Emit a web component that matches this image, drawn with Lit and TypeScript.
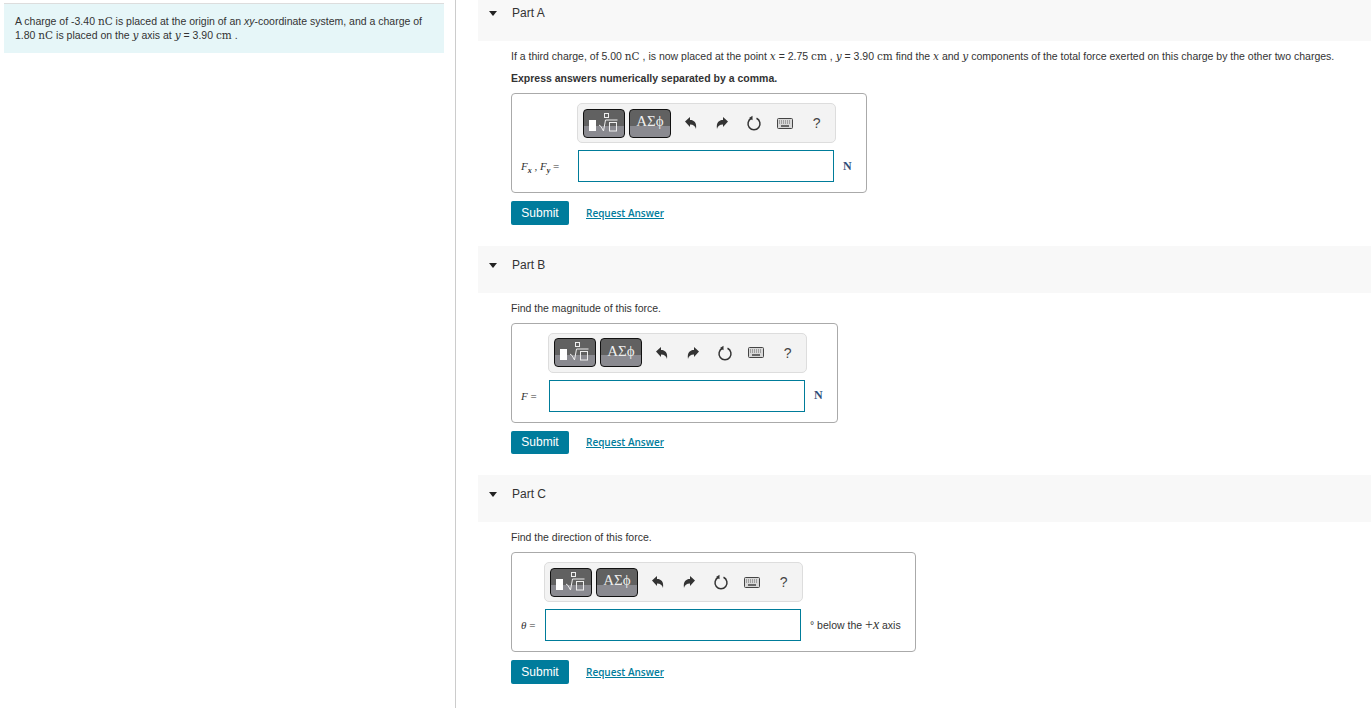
import { LitElement, html, css, nothing, TemplateResult } from 'lit';
import { customElement, property } from 'lit/decorators.js';

const mi = (s: string) => html`<span class="mi">${s}</span>`;
const mu = (s: string) => html`<span class="mu">${s}</span>`;

@customElement('answer-box')
export class AnswerBox extends LitElement {
  @property({ type: Number }) labelWidth = 66;
  @property({ type: Object }) label: TemplateResult | null = null;
  @property({ type: Object }) unit: TemplateResult | null = null;

  static styles = css`
    :host {
      display: block;
      width: fit-content;
      border: 1px solid #aaa;
      border-radius: 4px;
      font-family: 'Liberation Sans', Arial, sans-serif;
      font-size: 10.5px;
      color: #333;
      background: #fff;
    }
    .mi { font-family: 'DejaVu Serif', 'Liberation Serif', serif; font-style: italic; }
    .toolbar {
      box-sizing: border-box;
      display: flex;
      align-items: center;
      width: 259px;
      height: 40px;
      margin: 9px 0 7px -1px;
      padding-left: 5px;
      background: #f3f3f3;
      border: 1px solid #ddd;
      border-radius: 5px;
    }
    .tool {
      box-sizing: border-box;
      width: 42px;
      height: 29px;
      margin-right: 4px;
      display: flex;
      align-items: center;
      justify-content: center;
      border: 1px solid #111;
      border-radius: 4px;
      background: linear-gradient(#616161 0 60%, #8a8a90 60% 100%);
      color: #eee;
      font-family: 'Liberation Serif', serif;
      font-size: 15px;
      line-height: 1;
      padding-bottom: 3px;
    }
    .tool svg { display: block; margin-top: 2px; }
    .icons { display: flex; align-items: center; }
    .icon { width: 31.5px; display: flex; justify-content: center; color: #333; }
    .help { font-family: 'Liberation Sans', sans-serif; font-size: 14px; color: #444; }
    .row { display: flex; align-items: center; margin-bottom: 10px; }
    .label {
      box-sizing: border-box;
      padding: 0 6px 0 9px;
      font-family: 'Liberation Serif', serif;
      font-size: 11px;
      white-space: nowrap;
      text-align: left;
    }
    .label sub { font-size: 8px; font-weight: bold; line-height: 0; }
    .field {
      box-sizing: border-box;
      width: 256px;
      height: 32px;
      border: 1px solid #007c9a;
      background: #fff;
    }
    .unit { padding: 0 14px 0 9px; white-space: nowrap; }
    .unit .n { font-family: 'Liberation Serif', serif; font-size: 12px; font-weight: bold; color: #2f4f7a; }
  `;

  render() {
    return html`
      <div style="margin-left:${this.labelWidth - 1}px" class="toolbar">
        <div class="tool">
          <svg width="36" height="22" viewBox="0 0 36 22" fill="none" stroke="#eee" stroke-width="1">
            <rect x="3" y="8" width="7" height="11" fill="#fff" stroke="none" />
            <rect x="18.5" y="1.5" width="4" height="4" />
            <path d="M13 13l2 1.5 2.5 4.5 2-11h12" />
            <rect x="23.5" y="10.5" width="7" height="8.5" />
          </svg>
        </div>
        <div class="tool">ΑΣϕ</div>
        <div class="icons">
          <div class="icon">
            <svg width="14" height="14" viewBox="0 0 14 14" fill="currentColor"><path d="M1 5.5 6 1v3c4 0 7 2.500 6 9-.8-3-2.500-4.500-6-4.500V11z" /></svg>
          </div>
          <div class="icon">
            <svg width="14" height="14" viewBox="0 0 14 14" fill="currentColor"><path d="M13 5.500 8 1v3c-4 0-7 2.500-6 9 .8-3 2.500-4.500 6-4.500V11z" /></svg>
          </div>
          <div class="icon">
            <svg width="16" height="16" viewBox="0 0 16 16" fill="none" stroke="currentColor" stroke-width="1.500"><path d="M5.500 3.300a6 6 0 1 0 5 0" /><path d="M4 1v4.500h4.500" fill="none" stroke="none" /><path d="M6.500.7v4.600L3 3z" fill="currentColor" stroke="none" /></svg>
          </div>
          <div class="icon">
            <svg width="16" height="11" viewBox="0 0 16 11"><rect x=".5" y=".5" width="15" height="10" rx="1" fill="#d8d8d8" stroke="#444" /><path d="M2 3h12M2 5h12" stroke="#666" stroke-dasharray="1 1" /><path d="M4 8h8" stroke="#444" stroke-width="1.500" /></svg>
          </div>
          <div class="icon help">?</div>
        </div>
      </div>
      <div class="row">
        <div class="label" style="width:${this.labelWidth}px">${this.label}</div>
        <div class="field"></div>
        <div class="unit">${this.unit ?? nothing}</div>
      </div>
    `;
  }
}

@customElement('app-root')
export class AppRoot extends LitElement {
  static styles = css`
    :host {
      display: flex;
      min-height: 708px;
      overflow: hidden;
      font-family: 'Liberation Sans', Arial, sans-serif;
      font-size: 10.5px;
      color: #333;
    }
    .mi { font-family: 'DejaVu Serif', 'Liberation Serif', serif; font-style: italic; }
    .mu { font-family: 'DejaVu Serif', 'Liberation Serif', serif; }
    .left {
      box-sizing: border-box;
      flex: 0 0 456px;
      border-right: 1px solid #ccc;
      padding: 3px 11px 0 4px;
    }
    .prompt {
      background: #e6f6f8;
      border-top: 1px solid #ddd;
      padding: 10px 11px 11px;
      line-height: 14px;
      height: 50px;
      box-sizing: border-box;
    }
    .right { flex: 1; min-width: 0; padding-left: 22px; }
    .head {
      display: flex;
      align-items: flex-start;
      height: 47px;
      box-sizing: border-box;
      padding-top: 12px;
      background: #f8f8f8;
      font-size: 12px;
      line-height: 14px;
    }
    .part:first-child .head { height: 41px; padding-top: 6px; }
    .tri {
      width: 0;
      height: 0;
      margin: 5px 15px 0 11px;
      border-left: 4.500px solid transparent;
      border-right: 4.500px solid transparent;
      border-top: 5px solid #222;
    }
    .body { padding: 8px 0 21px 33px; }
    p { margin: 0; line-height: 15px; white-space: nowrap; }
    .text { margin-bottom: 7px; }
    .strong { font-weight: bold; }
    .actions { display: flex; align-items: center; margin-top: 8px; }
    .submit {
      box-sizing: border-box;
      width: 58px;
      height: 23.500px;
      display: flex;
      align-items: center;
      justify-content: center;
      background: #007c9c;
      border-radius: 2px;
      color: #fff;
      font-size: 12px;
    }
    .link {
      margin-left: 17px;
      color: #007c9c;
      text-decoration: underline;
      font-family: 'Open Sans', sans-serif;
      font-size: 10px;
      font-weight: 600;
    }
  `;

  actions() {
    return html`<div class="actions"><div class="submit">Submit</div><a class="link">Request Answer</a></div>`;
  }

  render() {
    return html`
      <div class="left">
        <div class="prompt">
          A charge of -3.40 ${mu('nC')} is placed at the origin of an <i>xy</i>-coordinate system, and a charge
          of 1.80 ${mu('nC')} is placed on the ${mi('y')} axis at ${mi('y')} = 3.90 ${mu('cm')} .
        </div>
      </div>
      <div class="right">
        <section class="part">
          <div class="head"><span class="tri"></span>Part A</div>
          <div class="body">
            <p class="text">
              If a third charge, of 5.00 ${mu('nC')} , is now placed at the point ${mi('x')} = 2.75 ${mu('cm')} , ${mi('y')} =
              3.90 ${mu('cm')} find the ${mi('x')} and ${mi('y')} components of the total force exerted on this charge by the
              other two charges.
            </p>
            <p class="text strong">Express answers numerically separated by a comma.</p>
            <answer-box
              .labelWidth=${66}
              .label=${html`<i>F<sub>x</sub></i> , <i>F<sub>y</sub></i> =`}
              .unit=${html`<span class="n">N</span>`}
            ></answer-box>
            ${this.actions()}
          </div>
        </section>
        <section class="part">
          <div class="head"><span class="tri"></span>Part B</div>
          <div class="body">
            <p class="text">Find the magnitude of this force.</p>
            <answer-box .labelWidth=${37} .label=${html`<i>F</i> =`} .unit=${html`<span class="n">N</span>`}></answer-box>
            ${this.actions()}
          </div>
        </section>
        <section class="part">
          <div class="head"><span class="tri"></span>Part C</div>
          <div class="body">
            <p class="text">Find the direction of this force.</p>
            <answer-box
              .labelWidth=${33}
              .label=${html`<i>θ</i> =`}
              .unit=${html`° below the <span style="font-family:'Liberation Serif',serif;font-size:14px">+<i>x</i></span> axis`}
            ></answer-box>
            ${this.actions()}
          </div>
        </section>
      </div>
    `;
  }
}
